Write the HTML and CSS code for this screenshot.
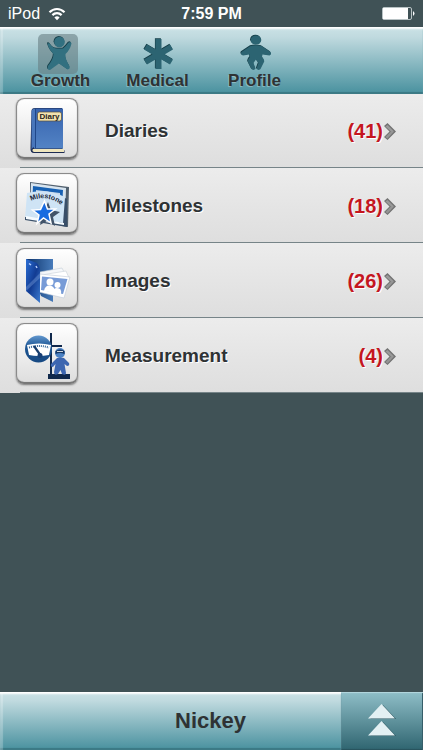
FILE: index.html
```html
<!DOCTYPE html>
<html lang="en">
<head>
<meta charset="utf-8">
<meta name="viewport" content="width=device-width, initial-scale=1">
<title>Growth</title>
<link rel="stylesheet" href="styles.css">
</head>
<body>
<div class="status">
  <div class="carrier">
    <span>iPod</span>
    <svg width="18" height="14" viewBox="0 0 18 14" fill="none" stroke="#fff" stroke-width="2.2"><path d="M1.5 5.2C5.8.9 12.2.9 16.500 5.200M4.400 8.100C7 5.500 11 5.500 13.600 8.100"/><path d="M9 13.200 6.400 10.400Q9 8.200 11.600 10.400Z" fill="#fff" stroke="none"/></svg>
  </div>
  <span class="time">7:59 PM</span>
  <svg class="battery" width="33" height="13" viewBox="0 0 33 13"><rect x=".5" y=".5" width="29" height="12" rx="1.500" fill="none" stroke="#b8c2c4"/><rect x="1" y="1" width="25" height="11" fill="#fff"/><path d="M31 4Q34 6.500 31 9Z" fill="#fff"/></svg>
</div>
<nav class="tabs bar">
  <a class="tab active" href="#growth">
    <svg width="40" height="40" viewBox="0 0 40 40"><use href="#child" fill="#173f49" transform="translate(-.6 -.8)"/><use href="#child" fill="#327080"/></svg>
    <span>Growth</span>
  </a>
  <a class="tab" href="#medical">
    <svg width="40" height="40" viewBox="0 0 40 40"><use href="#aster" fill="#173f49" transform="translate(-.6 -.8)"/><use href="#aster" fill="#2c6472"/></svg>
    <span>Medical</span>
  </a>
  <a class="tab" href="#profile">
    <svg width="40" height="40" viewBox="0 0 40 40"><use href="#baby" fill="#173f49" transform="translate(-.6 -.8)"/><use href="#baby" fill="#2c6472"/></svg>
    <span>Profile</span>
  </a>
</nav>
<main class="list">
  <a class="row" href="#diaries">
    <span class="tile">
      <svg width="62" height="62" viewBox="0 0 62 62">
        <path d="M15.500 13Q15.500 10 19 10H46V50L48.500 52.500V55H18Q14 55 14.500 50Z" fill="#1c2b52"/>
        <path d="M17 51H48V54H18Q15.500 53 17 51Z" fill="#eee5bd"/>
        <path d="M19.500 10.500H47V50.500H18Z" fill="url(#book)"/>
        <path d="M15.500 13Q16 10.500 19.500 10.500V49Q16 49 15.500 52Z" fill="#4876bb"/>
        <path d="M19.500 11V50" stroke="#1f478a"/>
        <rect x="21.500" y="14" width="24" height="9" rx="2" fill="#f2e3ae" stroke="#594f39" stroke-width=".7"/>
        <text x="33.500" y="21" text-anchor="middle" class="diary-text">Diary</text>
      </svg>
    </span>
    <span class="label">Diaries</span><span class="count">(41)</span>
    <svg class="chevron" width="13" height="17" viewBox="0 0 13 17"><use href="#chev"/></svg>
  </a>
  <a class="row" href="#milestones">
    <span class="tile">
      <svg width="62" height="62" viewBox="0 0 62 62">
        <path d="M14 9 53 14 52 54 46 53 14 44Z" fill="#52616f"/>
        <path d="M15 10 50 15 49 48 14 42Z" fill="#d7e4ef"/>
        <path d="M17 13 47 17 46 35 16 33Z" fill="#1761b3"/>
        <path d="M20 17 44 20V30L20 28Z" fill="#c5d8e9"/>
        <path d="M22 20 43 22V30H22Z" fill="#253857"/>
        <path d="M11 20Q31 15 49 24L48 53 9 46Z" fill="#cfe4f5"/>
        <path d="M9 44 47 50 49 25 51 26 51 54 9 47Z" fill="#394f69"/>
        <path d="M10 43 48 50V52L10 46Z" fill="#f5fbff"/>
        <path id="arc" d="M15 28Q31 20 48 34" fill="none"/>
        <text class="mile-text"><textPath href="#arc">Milestone</textPath></text>
        <path d="m32 29 3 8 9 2-7 5 2 9-8-5-7 4 2-9" fill="#42546a"/>
        <path d="m28.500 28 3 8H39.500l-6.500 5 2 9-7.500-5L21 50.500l2-8.500-6.500-5 8-.5Z" fill="#176be0" stroke="#fff" stroke-width="1.500"/>
      </svg>
    </span>
    <span class="label">Milestones</span><span class="count">(18)</span>
    <svg class="chevron" width="13" height="17" viewBox="0 0 13 17"><use href="#chev"/></svg>
  </a>
  <a class="row" href="#images">
    <span class="tile">
      <svg width="62" height="62" viewBox="0 0 62 62">
        <path d="M10 11H37V54L25 48Z" fill="url(#folderBack)"/>
        <path d="M24 24 46 20 48 24 45 43 24 41Z" fill="#f5f7fa" stroke="#c5ced7" stroke-width=".6"/>
        <path d="M25 27 50 23 53 30 45 45 24 43Z" fill="#fff" stroke="#c8d0d8" stroke-width=".6"/>
        <path d="M24 26 54 29 48 50 23 44Z" fill="#fff" stroke="#bdc8d6" stroke-width=".6"/>
        <path d="M26 28.500 51.500 31 47 46 25 42Z" fill="#779bd7"/>
        <g fill="#fff"><circle cx="34" cy="34" r="3.500"/><path d="M28 43Q29 37 34 37.500 39 38 39 45Z"/><circle cx="41.500" cy="37" r="3"/><path d="M36 45Q37 40 41 40 46 40 45 46Z"/></g>
        <path d="M10 11 21 15 24 20V55L10 43Z" fill="url(#folder)"/>
        <path d="M10 39 24 25V30L10 43Z" fill="#7297d5" opacity=".45"/>
        <path d="M13 15.500 15 17M20 18 21 20" stroke="#bad2ff" stroke-width="1.500"/>
      </svg>
    </span>
    <span class="label">Images</span><span class="count">(26)</span>
    <svg class="chevron" width="13" height="17" viewBox="0 0 13 17"><use href="#chev"/></svg>
  </a>
  <a class="row" href="#measurement">
    <span class="tile">
      <svg width="62" height="62" viewBox="0 0 62 62">
        <path d="M34 10H36V51H34ZM35 22H46V24H35ZM32 51H54V56H32Z" fill="#10284b"/>
        <circle cx="22.500" cy="26" r="13.500" fill="url(#gauge)"/>
        <path d="M11 22Q23 19 35 22L33 32Q22 34 13 32Z" fill="#fff"/>
        <path d="M13 24.500Q23 21.500 33 24.500" fill="none" stroke="#35679a" stroke-width="2" stroke-dasharray="1 1"/>
        <path d="M18 23 25 33" stroke="#163c6c" stroke-width="2.200"/><circle cx="24" cy="32.500" r="2.500" fill="#173f75"/>
        <circle cx="44" cy="30" r="5" fill="#4b81c3"/>
        <path d="M39.500 28Q44 25 48.500 28V31Q44 29 39.500 31Z" fill="#153763"/><path d="M41 28.500H47" stroke="#fff" stroke-width=".8"/>
        <path d="M41 35Q45 34 48 35L53 40Q54 43 51 43L48.500 41 50 50Q50 53 46 51L44.500 47 42 51Q38 53 38 49L39.500 41 37 44Q34 44 35 41Z" fill="#3d66b0"/>
      </svg>
    </span>
    <span class="label">Measurement</span><span class="count">(4)</span>
    <svg class="chevron" width="13" height="17" viewBox="0 0 13 17"><use href="#chev"/></svg>
  </a>
</main>
<footer class="footer">
  <div class="name bar">Nickey</div>
  <button class="up" aria-label="Expand">
    <svg width="30" height="34" viewBox="0 0 30 34"><path d="M3 15 16 1 29 15ZM3 32 16 18 29 32Z" fill="#24505a"/><path d="M1 14.500 14.500 0 28 14.500ZM1 31.500 14.500 17 28 31.500Z" fill="#e3f0f3"/></svg>
  </button>
</footer>
<svg class="defs" width="0" height="0" aria-hidden="true">
  <defs>
    <g id="child"><circle cx="21.500" cy="8" r="5.300"/><path d="M9.500 9.500Q11 8.500 12.500 10.500 15 14.500 19 14.500H25Q28 12 30.500 8.500 33 7 33.500 9.500 32 16 27.500 20 27 25 31.500 32 32.500 35 29.500 35.500L21 29.500 12 36Q8.500 36 10 32 15.500 25 15.500 20 10.500 15 9.500 9.500Z"/></g>
    <g id="aster"><path d="M17.500 5H23.500V15.500L32 10.500 35 15.500 26.500 20.500 35 25.500 32 30.500 23.500 25.500V35H17.500V25.500L9 30.500 6 25.500 14.500 20.500 6 15.500 9 10.500 17.500 15.500Z"/></g>
    <g id="baby"><ellipse cx="21" cy="6" rx="5.300" ry="4.500"/><path d="M15.500 12Q21 10.500 26.500 12L35.500 18Q37 20.500 34.500 21.500L27.500 20.500 27 23Q30 26 29 28L25.500 35Q23 37 21.500 34.500L23.500 29 21 25.500 18.500 29 20.500 34.500Q19 37 16.500 35L13 28Q12 26 15 23L14.500 20.500 8 21.500Q5 20.500 6.500 18Z"/></g>
    <g id="chev"><path d="M0 3 3.500 0 12 8.500 3.500 17 0 14 5.500 8.500Z" fill="#737373"/><path d="M1.500 3.500 3.500 2 10 8.500 8 9.500Z" fill="#9a9a9a"/><path d="M1.500 14 7 8.500 9.500 9 3.500 15.500Z" fill="#959595"/></g>
    <linearGradient id="book" x2="0" y2="1"><stop stop-color="#3763ad"/><stop offset="1" stop-color="#5283c5"/></linearGradient>
    <linearGradient id="folderBack"><stop stop-color="#0c326a"/><stop offset="1" stop-color="#477bba"/></linearGradient>
    <linearGradient id="folder" x2="1" y2="1"><stop stop-color="#2c6fd5"/><stop offset=".5" stop-color="#123c93"/><stop offset="1" stop-color="#3c7bd0"/></linearGradient>
    <linearGradient id="gauge" x2="0" y2="1"><stop stop-color="#6398cf"/><stop offset=".4" stop-color="#1d5694"/><stop offset="1" stop-color="#174982"/></linearGradient>
  </defs>
</svg>
</body>
</html>
```
FILE: styles.css
```css
* { box-sizing: border-box; }
body {
  margin: 0;
  min-height: 100vh;
  display: flex;
  flex-direction: column;
  background: #405256;
  color: #2e3234;
  font-family: "Liberation Sans", Arial, sans-serif;
}
a { color: inherit; text-decoration: none; }
svg { display: block; flex: none; }
.defs { position: absolute; }
.status {
  height: 27px;
  padding: 0 8px;
  display: grid;
  grid-template-columns: 1fr auto 1fr;
  align-items: center;
  color: #fff;
  font-size: 16px;
}
.carrier { display: flex; align-items: center; gap: 8px; }
.time { font-weight: bold; }
.battery { justify-self: end; }
.bar {
  background: linear-gradient(#cbe2e6, #c0dadf 15%, #4f95a2 95%);
  box-shadow: inset 0 3px 2px -1px #fff, inset 3px 0 1px rgba(255,255,255,.25), inset 0 -2px 1px #397783;
}
.tabs { height: 67px; padding: 7px 12px 0; display: flex; }
.tab {
  width: 97px;
  display: flex;
  flex-direction: column;
  align-items: center;
  font-size: 17px;
  font-weight: bold;
  line-height: 20px;
  text-shadow: -1px 1px 0 rgba(255,255,255,.3);
}
.tab svg { margin-bottom: -3px; border-radius: 5px; }
.tab span { position: relative; }
.active svg { margin-right: 5px; background: rgba(103,126,132,.6); }
.list { flex: 1; }
.row {
  height: 75px;
  padding: 5px 26px 4px 16px;
  display: flex;
  align-items: center;
  background:
    linear-gradient(#768488, #768488) 20px 100% / 100% 1px no-repeat,
    linear-gradient(#ececec, #dedede);
  font-size: 19px;
  font-weight: bold;
  text-shadow: 1px 1px 0 #fff;
}
.row:first-child { height: 74px; padding-top: 4px; }
.tile {
  align-self: flex-start;
  width: 62px;
  height: 61px;
  border: 1px solid #8b8b8b;
  border-bottom: 2px solid #777;
  border-radius: 8px;
  background: linear-gradient(#fff, #dedede);
  box-shadow: 0 1px 2px #777, inset 0 0 1px #8b8b8b;
}
.tile svg { margin: -1px; }
.diary-text { font: bold 8px "Liberation Sans", sans-serif; text-shadow: none; fill: #28241b; }
.mile-text { font: bold 7px "Liberation Sans", sans-serif; text-shadow: none; fill: #182638; }
.label { flex: 1; margin-left: 27px; }
.count { color: #c5161f; font-size: 20px; }
.chevron { margin-left: 1px; }
.footer { height: 58px; display: flex; }
.name {
  flex: 1;
  display: flex;
  align-items: center;
  justify-content: center;
  padding-left: 80px;
  font-size: 22px;
  font-weight: bold;
}
.up {
  width: 82px;
  padding: 0;
  border: 0;
  display: flex;
  align-items: center;
  justify-content: center;
  background: linear-gradient(#8fbec7, #2f6570);
  box-shadow: inset 0 1px 1px #b5d8de, inset 0 -1px 1px #28535d, inset -1px 0 #28535d;
}
```
